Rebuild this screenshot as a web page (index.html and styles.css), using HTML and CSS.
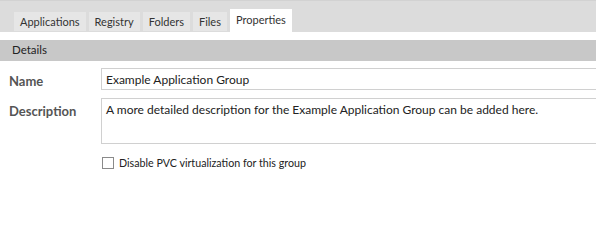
FILE: index.html
```html
<!DOCTYPE html>
<html lang="en">
<head>
  <meta charset="UTF-8" />
  <title>Application Group Properties</title>
  <link rel="stylesheet" href="styles.css">
</head>
<body>

  <div class="tabstrip">
    <div class="tab">Applications</div>
    <div class="tab">Registry</div>
    <div class="tab">Folders</div>
    <div class="tab">Files</div>
    <div class="tab active">Properties</div>
  </div>

  <div class="section">Details</div>

  <div class="form">
    <label class="label" for="name">Name</label>
    <input class="field" id="name" type="text" value="Example Application Group">

    <label class="label" for="desc">Description</label>
    <textarea class="field area" id="desc">A more detailed description for the Example Application Group can be added here.</textarea>

    <div></div>
    <label class="check">
      <input type="checkbox">
      <span class="box"></span>
      Disable PVC virtualization for this group
    </label>
  </div>

</body>
</html>
```

FILE: styles.css
```css
* {
  box-sizing: border-box;
}

body {
  margin: 0;
  background: #fff;
  font-family: "Segoe UI", Lato, "Noto Sans", sans-serif;
  font-size: 12px;
  color: #222;
}

.tabstrip {
  display: flex;
  align-items: flex-end;
  gap: 3px;
  height: 32px;
  padding-left: 14px;
  background: #dcdcdc;
  border-top: 1px solid #d2d2d2;
}

.tab {
  height: 19px;
  margin-bottom: 1px;
  padding: 0 6px;
  line-height: 19px;
  font-size: 11px;
  color: #333;
  background: #e6e6e6;
}

.tab.active {
  height: 23px;
  margin-bottom: 0;
  line-height: 21px;
  background: #fff;
}

.section {
  margin-top: 8px;
  height: 21px;
  padding-left: 12px;
  line-height: 20px;
  font-size: 11.5px;
  background: #c8c8c8;
  color: #222;
}

.form {
  display: grid;
  grid-template-columns: 92px 1fr;
  row-gap: 8px;
  margin-top: 7px;
  padding-left: 9px;
}

.label {
  font-weight: bold;
  font-size: 13px;
  color: #555;
  padding-top: 5px;
}

.field {
  display: block;
  width: calc(100% + 2px);
  height: 22px;
  margin: 0;
  padding: 0 4px;
  border: 1px solid #d0d0d0;
  border-radius: 0;
  font-family: inherit;
  font-size: 12px;
  color: #222;
  outline: none;
}

.area {
  height: 46px;
  padding-top: 3px;
  resize: none;
  overflow: hidden;
}

.check {
  display: flex;
  align-items: center;
  gap: 5px;
  margin-top: 4px;
  padding-left: 1px;
  font-size: 10.7px;
  color: #222;
}

.check input {
  display: none;
}

.box {
  width: 12px;
  height: 12px;
  border: 1px solid #8a8a8a;
  background: #fff;
}
```
